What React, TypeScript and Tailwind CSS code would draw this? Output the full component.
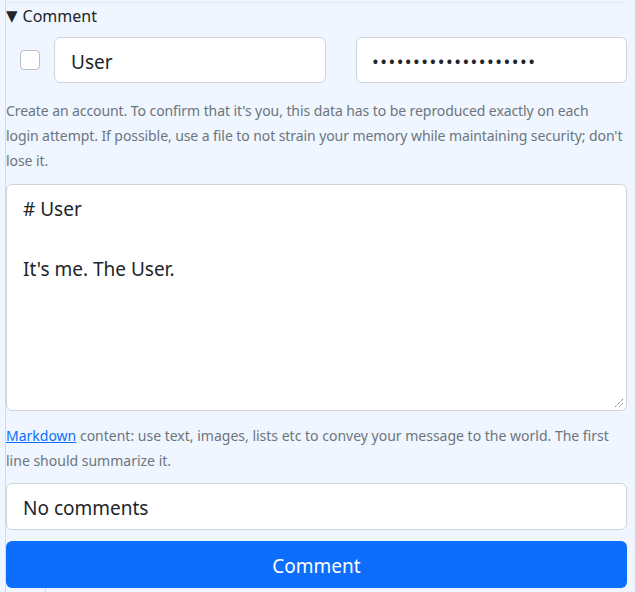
import React from "react";

export default function App() {
  const font = { fontFamily: '"Noto Sans", "Open Sans", sans-serif' };
  return (
    <div className="w-[635px] h-[592px] bg-[#eff6ff] overflow-hidden relative" style={font}>
      <div className="absolute left-[5px] top-0 bottom-0 w-px bg-[#d6dbe1]" />
      <div className="absolute left-[45px] top-[588px] bottom-0 w-px bg-[#d6dbe1]" />
      <div className="absolute left-[6px] right-[10px] top-[2px] h-px bg-[#e3e8ee]" />
      <div className="pl-[6px] pr-[8px] pt-[5px]">
        <div className="flex items-center gap-[5px] h-[22px] text-[16px] text-[#212529]">
          <span className="text-[15px] leading-none" style={{ fontFamily: '"DejaVu Sans", sans-serif' }}>▼</span>
          <span>Comment</span>
        </div>
        <div className="flex items-center mt-[10px] h-[46px]">
          <div className="w-[20px] h-[20px] ml-[14px] rounded-[4px] border border-[#b8bec4] bg-white" />
          <div className="ml-[14px] w-[272px] h-[46px] rounded-[6px] border border-[#ced4da] bg-white flex items-center px-[16px] pt-[4px] text-[19px] text-[#212529]">
            User
          </div>
          <div className="ml-[30px] flex-1 h-[46px] rounded-[6px] border border-[#ced4da] bg-white flex items-center px-[15px] pt-[3px] text-[18px] tracking-[1.45px] text-[#212529]">
            ••••••••••••••••••••
          </div>
        </div>
        <p className="mt-[15px] text-[14px] leading-[25px] tracking-[-0.08px] text-[#6c757d] whitespace-nowrap">
          Create an account. To confirm that it's you, this data has to be reproduced exactly on each
          <br />
          login attempt. If possible, use a file to not strain your memory while maintaining security; don't
          <br />
          lose it.
        </p>
        <div className="relative mt-[11px] h-[227px] rounded-[6px] border border-[#ced4da] bg-white px-[16px] pt-[9px] text-[19px] leading-[30px] text-[#212529]">
          <div># User</div>
          <div className="h-[30px]" />
          <div>It's me. The User.</div>
          <svg className="absolute right-[2px] bottom-[2px]" width="10" height="10" viewBox="0 0 10 10">
            <line x1="9" y1="1" x2="1" y2="9" stroke="#555" strokeWidth="1" strokeDasharray="1 1" />
            <line x1="9" y1="5" x2="5" y2="9" stroke="#555" strokeWidth="1" strokeDasharray="1 1" />
          </svg>
        </div>
        <p className="mt-[12px] text-[14px] leading-[25px] text-[#6c757d]">
          <a className="text-[#0d6efd] underline" href="#">Markdown</a> content: use text, images, lists etc to convey your message to the world. The first line should summarize it.
        </p>
        <div className="mt-[10px] h-[47px] rounded-[6px] border border-[#ced4da] bg-white flex items-center px-[16px] pt-[3px] text-[19px] text-[#212529]">
          No comments
        </div>
        <button className="mt-[11px] w-full h-[47px] rounded-[6px] bg-[#0d6efd] text-white text-[19px] flex items-center justify-center pt-[3px]">
          Comment
        </button>
      </div>
    </div>
  );
}
